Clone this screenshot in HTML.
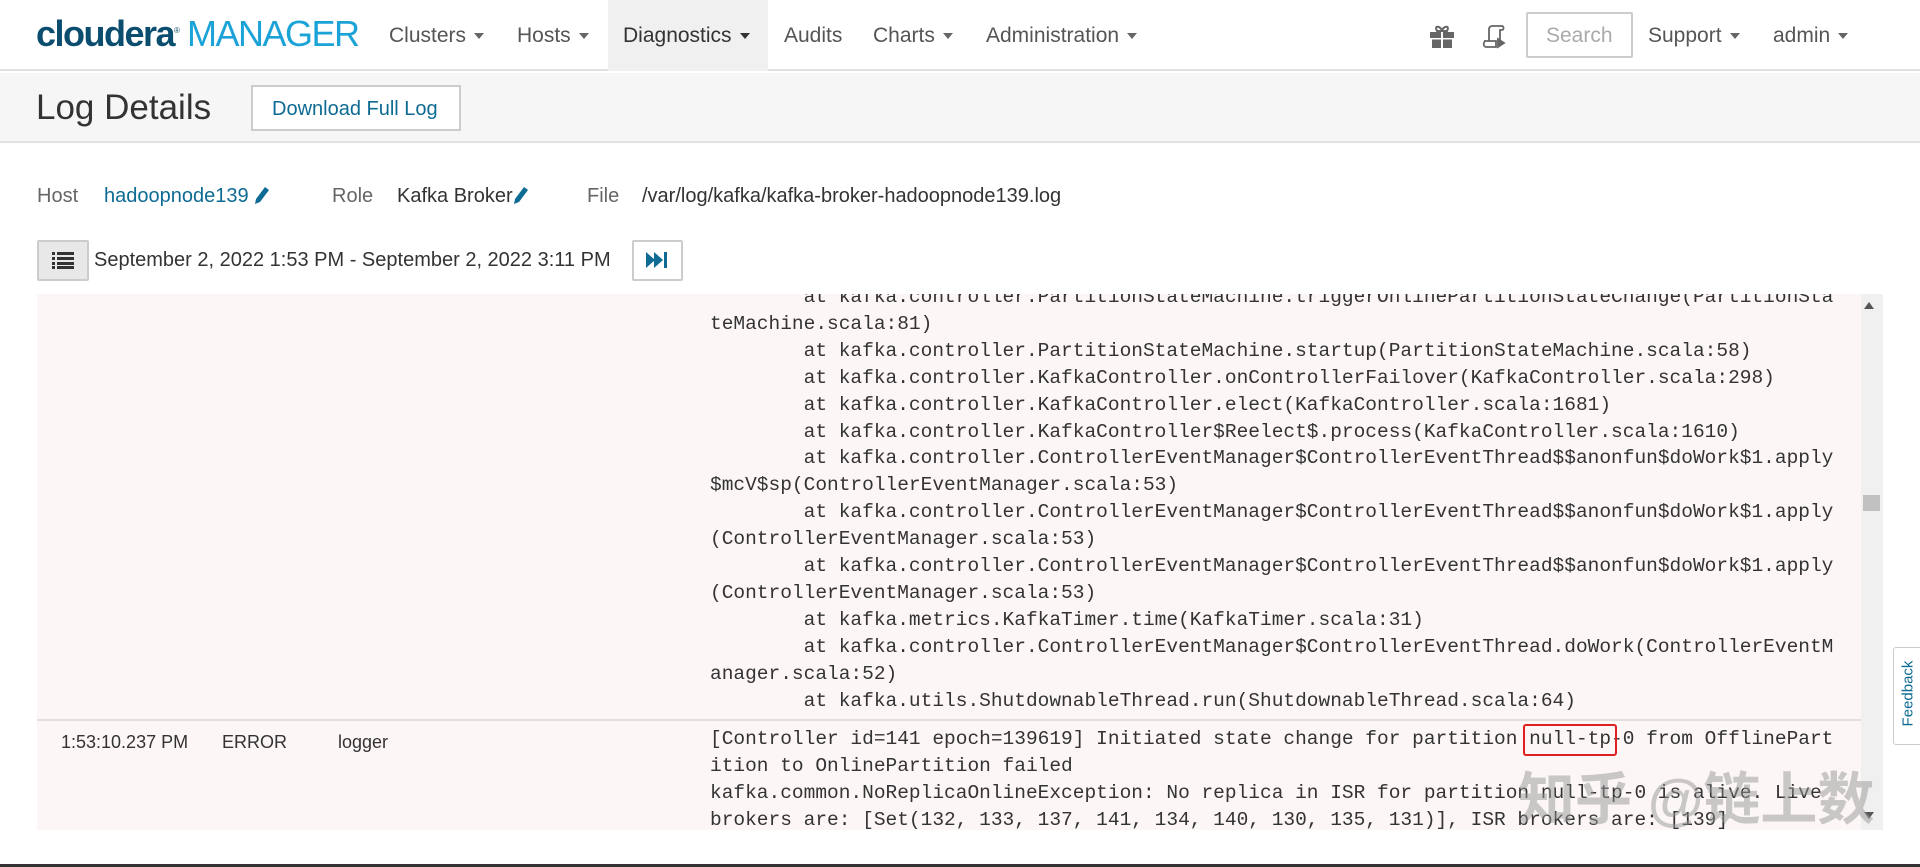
<!DOCTYPE html>
<html><head><meta charset="utf-8"><style>
*{margin:0;padding:0;box-sizing:border-box}
body{width:1920px;height:867px;overflow:hidden;background:#fff;font-family:"Liberation Sans",sans-serif;color:#333;position:relative}
.a{position:absolute;white-space:nowrap}
.nav{font-size:21px;color:#555;top:24px}
.car{display:inline-block;width:0;height:0;border-left:5px solid transparent;border-right:5px solid transparent;border-top:6px solid #666;vertical-align:middle;margin-left:8px}
.log{position:absolute;left:710px;font-family:"Liberation Mono","DejaVu Sans Mono",monospace;font-size:19.5px;line-height:26.9px;white-space:pre;color:#333}
.lbl{font-size:20px;color:#666;top:185px}
</style></head><body>
<div class="a" style="left:0;top:0;width:1920px;height:71px;border-bottom:2px solid #e0e0e0"></div>
<div class="a" style="left:608px;top:0;width:160px;height:71px;background:#f0f0f0"></div>
<div class="a" style="left:36px;top:13px;font-size:36px;letter-spacing:-1.5px"><span style="color:#0b4d6e;font-weight:bold">cloudera</span><sup style="font-size:8px;color:#0b4d6e">®</sup><span style="color:#1ba3d8"> MANAGER</span></div>
<div class="a nav" style="left:389px">Clusters<span class="car"></span></div>
<div class="a nav" style="left:517px">Hosts<span class="car"></span></div>
<div class="a nav" style="left:623px;color:#333">Diagnostics<span class="car" style="border-top-color:#333"></span></div>
<div class="a nav" style="left:784px">Audits</div>
<div class="a nav" style="left:873px">Charts<span class="car"></span></div>
<div class="a nav" style="left:986px">Administration<span class="car"></span></div>
<svg class="a" style="left:1430px;top:25px" width="24" height="23" viewBox="0 0 24 23"><path d="M7 6C4 1 9 0 12 5C15 0 20 1 17 6Z" fill="none" stroke="#666" stroke-width="2"/><rect x="0" y="7" width="24" height="6" fill="#666"/><rect x="2" y="14" width="20" height="9" fill="#666"/><rect x="11" y="7" width="2" height="16" fill="#fff"/><rect x="0" y="13" width="24" height="1.5" fill="#fff"/></svg>
<svg class="a" style="left:1482px;top:25px" width="24" height="24" viewBox="0 0 24 24" fill="none" stroke="#666" stroke-width="1.8"><path d="M7 16V4C7 2 9 1 10 1H20C22 1 22 5 20 5H18V16"/><path d="M2 16H14V22H4C1 22 1 16 4 16"/><path d="M16 14L22 18L16 22Z" fill="#666"/></svg>
<div class="a" style="left:1526px;top:12px;width:107px;height:46px;border:2px solid #ccc;border-radius:2px;font-size:21px;color:#aaa;padding:10px 0 0 18px">Search</div>
<div class="a nav" style="left:1648px">Support<span class="car"></span></div>
<div class="a nav" style="left:1773px">admin<span class="car"></span></div>
<div class="a" style="left:0;top:73px;width:1920px;height:70px;background:#f6f6f6;border-bottom:2px solid #e2e2e2"></div>
<div class="a" style="left:36px;top:88px;font-size:35px;color:#333">Log Details</div>
<div class="a" style="left:251px;top:85px;width:210px;height:46px;border:2px solid #ccc;background:#fff;font-size:20px;color:#0e6b93;padding:11px 0 0 19px">Download Full Log</div>
<div class="a lbl" style="left:37px">Host</div>
<div class="a lbl" style="left:104px;color:#0e6b93">hadoopnode139 <svg width="16" height="18" viewBox="0 0 16 18" style="vertical-align:-2px"><path d="M11 1L15 4L6 16L1 18L2 13Z" fill="#0e6b93"/></svg></div>
<div class="a lbl" style="left:332px">Role</div>
<div class="a lbl" style="left:397px;color:#333">Kafka Broker<svg width="16" height="18" viewBox="0 0 16 18" style="vertical-align:-2px"><path d="M11 1L15 4L6 16L1 18L2 13Z" fill="#0e6b93"/></svg></div>
<div class="a lbl" style="left:587px">File</div>
<div class="a lbl" style="left:642px;color:#333">/var/log/kafka/kafka-broker-hadoopnode139.log</div>
<div class="a" style="left:37px;top:240px;width:52px;height:41px;background:#e8e8e8;border:2px solid #ccc;border-radius:2px"></div>
<svg class="a" style="left:52px;top:251px" width="22" height="18" viewBox="0 0 22 18" fill="#333"><rect x="0" y="1" width="3" height="3"/><rect x="5" y="1" width="17" height="3"/><rect x="0" y="6" width="3" height="3"/><rect x="5" y="6" width="17" height="3"/><rect x="0" y="11" width="3" height="3"/><rect x="5" y="11" width="17" height="3"/><rect x="0" y="15" width="3" height="3"/><rect x="5" y="15" width="17" height="3"/></svg>
<div class="a" style="left:94px;top:249px;font-size:20px;color:#333">September 2, 2022 1:53 PM - September 2, 2022 3:11 PM</div>
<div class="a" style="left:632px;top:240px;width:51px;height:41px;background:#fff;border:2px solid #ccc;border-radius:2px"></div>
<svg class="a" style="left:646px;top:252px" width="22" height="16" viewBox="0 0 22 16" fill="#0e6b93"><path d="M0 0L9 8L0 16Z"/><path d="M8 0L17 8L8 16Z"/><rect x="18" y="0" width="3" height="16"/></svg>
<div class="a" style="left:37px;top:294px;width:1846px;height:536px;background:#fcf6f6;overflow:hidden">
<div class="log" style="left:673px;top:-10px">        at kafka.controller.PartitionStateMachine.triggerOnlinePartitionStateChange(PartitionSta
teMachine.scala:81)
        at kafka.controller.PartitionStateMachine.startup(PartitionStateMachine.scala:58)
        at kafka.controller.KafkaController.onControllerFailover(KafkaController.scala:298)
        at kafka.controller.KafkaController.elect(KafkaController.scala:1681)
        at kafka.controller.KafkaController$Reelect$.process(KafkaController.scala:1610)
        at kafka.controller.ControllerEventManager$ControllerEventThread$$anonfun$doWork$1.apply
$mcV$sp(ControllerEventManager.scala:53)
        at kafka.controller.ControllerEventManager$ControllerEventThread$$anonfun$doWork$1.apply
(ControllerEventManager.scala:53)
        at kafka.controller.ControllerEventManager$ControllerEventThread$$anonfun$doWork$1.apply
(ControllerEventManager.scala:53)
        at kafka.metrics.KafkaTimer.time(KafkaTimer.scala:31)
        at kafka.controller.ControllerEventManager$ControllerEventThread.doWork(ControllerEventM
anager.scala:52)
        at kafka.utils.ShutdownableThread.run(ShutdownableThread.scala:64)</div>
<div class="a" style="left:0;top:425px;width:1824px;height:2px;background:#e4dede"></div>
<div class="a" style="left:24px;top:438px;font-size:18px">1:53:10.237 PM</div>
<div class="a" style="left:185px;top:438px;font-size:18px">ERROR</div>
<div class="a" style="left:301px;top:438px;font-size:18px">logger</div>
<div class="log" style="left:673px;top:432px">[Controller id=141 epoch=139619] Initiated state change for partition null-tp-0 from OfflinePart
ition to OnlinePartition failed
kafka.common.NoReplicaOnlineException: No replica in ISR for partition null-tp-0 is alive. Live
brokers are: [Set(132, 133, 137, 141, 134, 140, 130, 135, 131)], ISR brokers are: [139]</div>
<div class="a" style="left:1486px;top:430px;width:94px;height:32px;border:2px solid #e02020;border-radius:3px"></div>
<div class="a" style="left:1824px;top:0;width:22px;height:536px;background:#f0f0f0"></div>
<div class="a" style="left:1827px;top:8px;width:0;height:0;border-left:5px solid transparent;border-right:5px solid transparent;border-bottom:7px solid #555"></div>
<div class="a" style="left:1827px;top:518px;width:0;height:0;border-left:5px solid transparent;border-right:5px solid transparent;border-top:7px solid #555"></div>
<div class="a" style="left:1826px;top:201px;width:17px;height:16px;background:#c1c1c1"></div>
</div>
<div class="a" style="left:1518px;top:754px;font-size:57px;color:rgba(150,150,150,0.5);font-family:'Liberation Sans','Noto Sans CJK SC',sans-serif;font-weight:bold">知乎 @链上数</div>
<div class="a" style="left:1893px;top:647px;width:30px;height:98px;background:#fff;border:1px solid #ccc;border-radius:3px 0 0 3px"></div>
<div class="a" style="left:1875px;top:685px;transform:rotate(-90deg);font-size:15px;color:#0e6b93;width:66px;text-align:center">Feedback</div>
<div class="a" style="left:0;top:864px;width:1920px;height:3px;background:#333"></div>
</body></html>
